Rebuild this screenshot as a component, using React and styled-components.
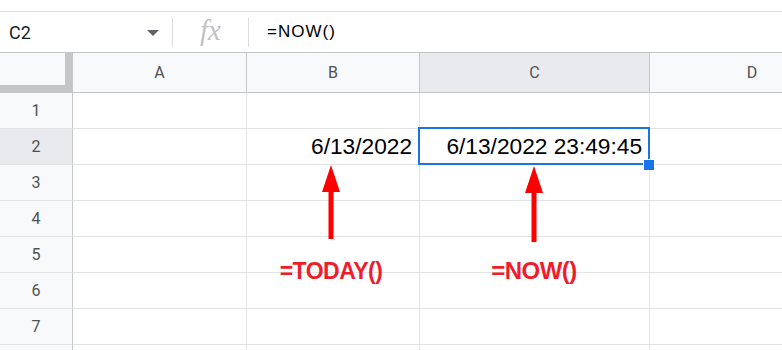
import styled, { createGlobalStyle } from "styled-components";

const GlobalStyle = createGlobalStyle`
  html, body {
    margin: 0;
    padding: 0;
    background: #ffffff;
    overflow: hidden;
  }
  body {
    font-family: "Liberation Sans", Arial, sans-serif;
  }
`;

const columns = [
  { key: "A", width: 174 },
  { key: "B", width: 173 },
  { key: "C", width: 230 },
  { key: "D", width: 205 },
];

// row 8 only peeks in at the bottom edge, its number is out of view
const rows = [1, 2, 3, 4, 5, 6, 7, 8];
const visibleRows = 7;

const cellValues = {
  B2: "6/13/2022",
  C2: "6/13/2022 23:49:45",
};

const selected = { col: "C", row: 2 };

export default function App() {
  return (
    <>
      <GlobalStyle />
      <StyledPage>
        <StyledTopStrip />
        <StyledFormulaBar>
          <StyledNameBox>
            <span>C2</span>
            <StyledCaret />
          </StyledNameBox>
          <StyledDivider />
          <StyledFx>fx</StyledFx>
          <StyledDivider />
          <StyledFormula>=NOW()</StyledFormula>
        </StyledFormulaBar>

        <StyledGridWrap>
          <StyledGrid>
            <StyledCorner />
            {columns.map((c) => (
              <StyledColHeader key={c.key} $active={c.key === selected.col}>
                {c.key}
              </StyledColHeader>
            ))}
            {rows.map((r) => (
              <StyledRow key={r}>
                <StyledRowHeader $active={r === selected.row}>
                  {r <= visibleRows ? r : ""}
                </StyledRowHeader>
                {columns.map((c) => {
                  const id = c.key + r;
                  const isSel = c.key === selected.col && r === selected.row;
                  return (
                    <StyledCell key={id}>
                      {cellValues[id]}
                      {isSel && (
                        <StyledSelection>
                          <StyledHandle />
                        </StyledSelection>
                      )}
                    </StyledCell>
                  );
                })}
              </StyledRow>
            ))}
          </StyledGrid>

          <Annotation x={331} tipY={112} baseY={186} labelY={205} size={23} label="=TODAY()" />
          <Annotation x={534} tipY={113} baseY={189} labelY={204} size={24} label="=NOW()" />
        </StyledGridWrap>
      </StyledPage>
    </>
  );
}

function Annotation({ x, tipY, baseY, labelY, size, label }) {
  const h = baseY - tipY;
  return (
    <>
      <StyledArrow
        width="20"
        height={h}
        viewBox={`0 0 20 ${h}`}
        style={{ left: x - 10, top: tipY }}
      >
        <polygon points="10,0 19,27 1,27" fill="#ff0000" />
        <rect x="7.5" y="25" width="5" height={h - 25} fill="#ff0000" />
      </StyledArrow>
      <StyledLabel $size={size} style={{ left: x - 80, top: labelY }}>
        {label}
      </StyledLabel>
    </>
  );
}

const StyledPage = styled.div`
  width: 782px;
  height: 350px;
  overflow: hidden;
  display: flex;
  flex-direction: column;
`;

const StyledTopStrip = styled.div`
  height: 11px;
  border-bottom: 1px solid #dadce0;
  flex-shrink: 0;
`;

const StyledFormulaBar = styled.div`
  display: flex;
  align-items: center;
  height: 40px;
  border-bottom: 1px solid #c4c7c5;
  flex-shrink: 0;
`;

const StyledNameBox = styled.div`
  width: 172px;
  display: flex;
  align-items: center;
  justify-content: space-between;
  box-sizing: border-box;
  padding: 0 13px 0 9px;
  font-family: Roboto, "Liberation Sans", Arial, sans-serif;
  font-size: 18px;
  color: #202124;
`;

const StyledCaret = styled.span`
  width: 0;
  height: 0;
  border-left: 6px solid transparent;
  border-right: 6px solid transparent;
  border-top: 6px solid #5f6368;
  margin-top: 2px;
`;

const StyledDivider = styled.div`
  width: 1px;
  height: 29px;
  background: #dadce0;
`;

const StyledFx = styled.div`
  width: 75px;
  text-align: center;
  font-family: "Liberation Serif", "Times New Roman", serif;
  font-style: italic;
  font-size: 29px;
  color: #c2c2c2;
  line-height: 1;
  margin-top: -4px;
`;

const StyledFormula = styled.div`
  padding-left: 18px;
  font-family: "Liberation Sans", Arial, sans-serif;
  font-size: 17px;
  letter-spacing: 1px;
  color: #000000;
`;

const StyledGridWrap = styled.div`
  position: relative;
  flex: 1;
`;

const StyledGrid = styled.div`
  display: grid;
  grid-template-columns: 73px 174px 173px 230px 205px;
  grid-auto-rows: 36px;
  grid-template-rows: 40px;
`;

const StyledRow = styled.div`
  display: contents;
`;

const StyledCorner = styled.div`
  background: #f8f9fa;
  border-right: 8px solid #c4c7c5;
  border-bottom: 8px solid #c4c7c5;
`;

const StyledColHeader = styled.div`
  display: flex;
  align-items: center;
  justify-content: center;
  background: ${(p) => (p.$active ? "#e8eaed" : "#f8f9fa")};
  border-right: 1px solid #c4c7c5;
  border-bottom: 1px solid #c4c7c5;
  font-family: Roboto, "Liberation Sans", Arial, sans-serif;
  font-size: 16px;
  color: #4d5156;
`;

const StyledRowHeader = styled.div`
  display: flex;
  align-items: center;
  justify-content: center;
  background: ${(p) => (p.$active ? "#e8eaed" : "#f8f9fa")};
  border-right: 1px solid #c4c7c5;
  border-bottom: 1px solid #e2e3e3;
  font-family: Roboto, "Liberation Sans", Arial, sans-serif;
  font-size: 16px;
  color: #4d5156;
`;

const StyledCell = styled.div`
  position: relative;
  display: flex;
  align-items: center;
  justify-content: flex-end;
  padding: 0 7px;
  border-right: 1px solid #e2e3e3;
  border-bottom: 1px solid #e2e3e3;
  font-family: "Liberation Sans", Arial, sans-serif;
  font-size: 22.7px;
  color: #000000;
  white-space: nowrap;
`;

const StyledSelection = styled.div`
  position: absolute;
  left: -2px;
  top: -2px;
  right: -1px;
  bottom: -1px;
  border: 2px solid #1a73e8;
  pointer-events: none;
  z-index: 2;
`;

const StyledHandle = styled.div`
  position: absolute;
  right: -7px;
  bottom: -8px;
  width: 10px;
  height: 10px;
  background: #1a73e8;
  border: 1px solid #ffffff;
`;

const StyledArrow = styled.svg`
  position: absolute;
  overflow: visible;
`;

const StyledLabel = styled.div`
  position: absolute;
  width: 160px;
  text-align: center;
  font-family: "Liberation Sans", Arial, sans-serif;
  font-weight: 700;
  font-size: ${(p) => p.$size}px;
  color: #f01c2c;
  letter-spacing: -0.5px;
`;
